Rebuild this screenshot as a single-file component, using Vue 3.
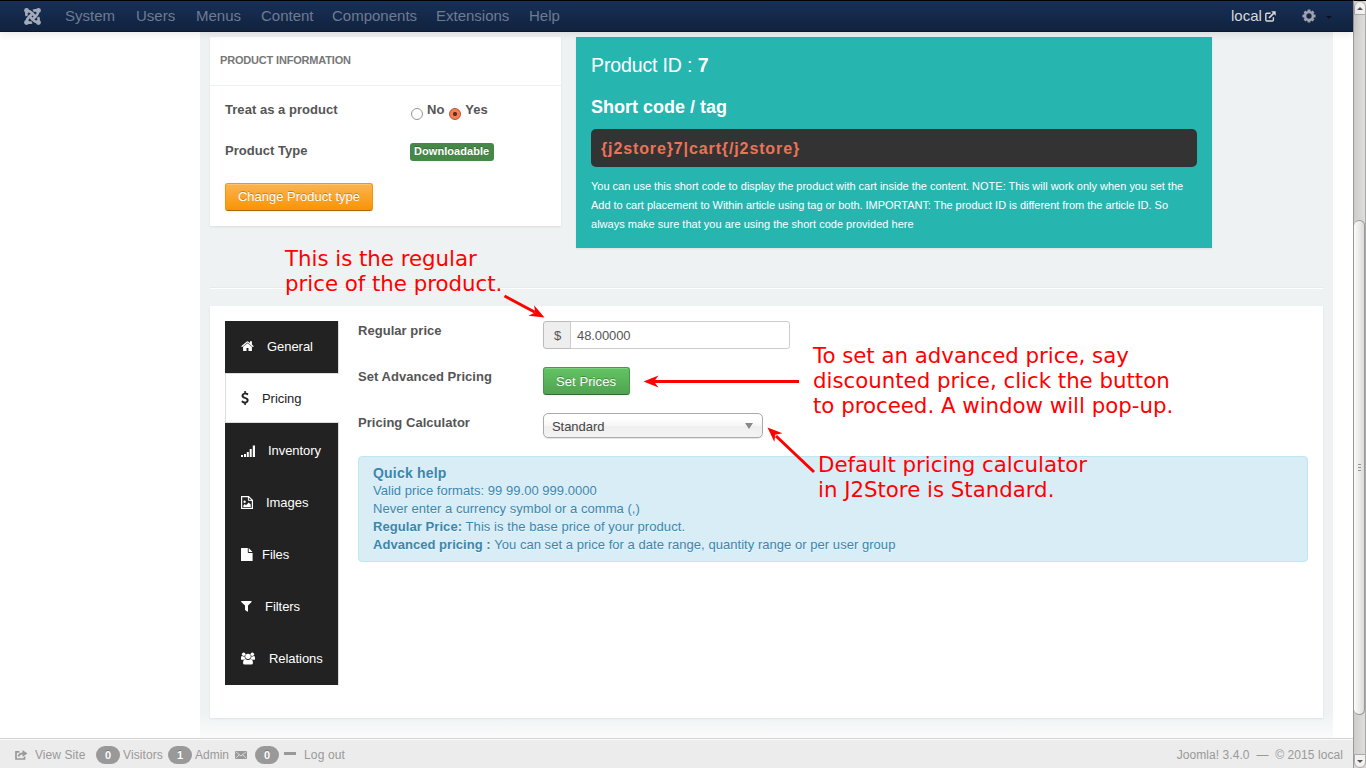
<script setup>
const menu = [
  { t: 'System', w: 71 }, { t: 'Users', w: 60 }, { t: 'Menus', w: 65 }, { t: 'Content', w: 71 },
  { t: 'Components', w: 104 }, { t: 'Extensions', w: 93 }, { t: 'Help', w: 40 },
]
const tabs = [
  { t: 'General', icon: 'home', gap: 26 },
  { t: 'Pricing', icon: 'usd', gap: 21, active: true },
  { t: 'Inventory', icon: 'signal', gap: 27 },
  { t: 'Images', icon: 'image', gap: 25 },
  { t: 'Files', icon: 'file', gap: 21 },
  { t: 'Filters', icon: 'filter', gap: 24 },
  { t: 'Relations', icon: 'group', gap: 28 },
]
</script>

<template>
  <div class="screen">
    <div class="page">
      <header class="topbar">
        <svg class="joomla" width="17" height="17" viewBox="1 1 16 16" fill="none" stroke="#a3abb8">
          <g stroke-width="2.5" stroke-linejoin="round">
            <path d="M3.8 8.400C2.700 6.600 3.100 4.200 5 3.900c1.300-.2 2.100.5 3 1.400l4.600 4.600" />
            <path d="M9.600 3.800C11.400 2.700 13.800 3.100 14.100 5c.2 1.300-.5 2.100-1.400 3l-4.600 4.600" />
            <path d="M14.200 9.600c1.100 1.800.7 4.200-1.200 4.500-1.300.2-2.100-.5-3-1.400L5.400 8.100" />
            <path d="M8.400 14.200c-1.800 1.100-4.200.7-4.500-1.200-.2-1.300.5-2.100 1.400-3l4.600-4.600" />
          </g>
          <g fill="#a3abb8" stroke="none">
            <circle cx="3.400" cy="3.400" r="2.300" /><circle cx="14.600" cy="3.400" r="2.300" />
            <circle cx="3.400" cy="14.600" r="2.300" /><circle cx="14.600" cy="14.600" r="2.300" />
          </g>
        </svg>
        <nav class="menu">
          <span v-for="m in menu" :key="m.t" :style="{ width: m.w + 'px' }">{{ m.t }}</span>
        </nav>
        <span class="site">local</span>
        <svg class="ext" width="11" height="11" viewBox="0 0 11 11" fill="none" stroke="#d9d9d9">
          <path d="M5.6 2.2H1.9a1.1 1.1 0 0 0-1.1 1.1v5.6A1.1 1.1 0 0 0 1.9 10h5.4a1.1 1.1 0 0 0 1.1-1.1V6.2" stroke-width="1.4" />
          <path d="M4 7l4.6-4.6" stroke-width="1.6" />
          <path d="M6.2.3h4.5v4.5z" fill="#d9d9d9" stroke="none" />
        </svg>
        <svg class="gear" width="14" height="14" viewBox="0 0 14 14" fill="none" stroke="#a0a3ac">
          <circle cx="7" cy="7" r="3.900" stroke-width="2.500" />
          <path d="M7 .5v2M7 11.500v2M.5 7h2M11.500 7h2M2.500 2.500l1.300 1.300M10.200 10.200l1.300 1.300M2.500 11.500l1.300-1.300M10.200 3.800l1.300-1.300" stroke-width="2.800" />
        </svg>
        <i class="caret"></i>
      </header>

      <main class="content">
        <div class="row">
          <section class="info">
            <h2>PRODUCT INFORMATION</h2>
            <div class="line treat">
              <b class="lbl">Treat as a product</b>
              <i class="radio"></i><b class="no">No</b><i class="radio on"></i><b class="yes">Yes</b>
            </div>
            <div class="line type">
              <b class="lbl">Product Type</b><span class="badge">Downloadable</span>
            </div>
            <button class="btn warn">Change Product type</button>
          </section>
          <section class="teal">
            <div class="pid">Product ID : <b>7</b></div>
            <h3>Short code / tag</h3>
            <div class="code">{j2store}7|cart{/j2store}</div>
            <p><span class="t1">You can use this short code to display the product with cart inside the content. NOTE: This will work only when you set the</span><br><span class="t2">Add to cart placement to Within article using tag or both. IMPORTANT: The product ID is different from the article ID. So</span><br><span class="t3">always make sure that you are using the short code provided here</span></p>
          </section>
        </div>
        <div class="rule"></div>
        <section class="panel">
          <ul class="tabs">
            <li v-for="t in tabs" :key="t.t" :class="{ active: t.active }">
              <span class="ico" :style="{ width: t.gap + 'px' }">
                <svg v-if="t.icon === 'home'" width="13" height="12" viewBox="50 130 1692 1500" fill="currentColor"><path d="M1472 992v480q0 26-19 45t-45 19h-384v-384h-256v384h-384q-26 0-45-19t-19-45v-480q0-1 .5-3t.5-3l575-474 575 474q1 2 1 6zm223-69l-62 74q-8 9-21 11h-3q-13 0-21-7l-692-577-692 577q-12 8-24 7-13-2-21-11l-62-74q-8-10-7-23.5t11-21.5l719-599q32-26 76-26t76 26l244 204v-195q0-14 9-23t23-9h192q14 0 23 9t9 23v408l219 182q10 8 11 21.5t-7 23.5z" /></svg>
                <svg v-else-if="t.icon === 'usd'" width="8" height="14" viewBox="400 0 990 1792" fill="currentColor"><path d="M1362 1185q0 153-99.5 263.5t-258.5 136.5v175q0 14-9 23t-23 9h-135q-13 0-22.5-9.5t-9.5-22.5v-175q-66-9-127.5-31t-101.5-44.5-74-48-46.5-37.5-17.5-18q-17-21-2-41l103-135q7-10 23-12 15-2 24 9l2 2q113 99 243 125 37 8 74 8 81 0 142.5-43t61.5-122q0-28-15-53t-33.5-42-58.5-37.5-66-32-80-32.5q-39-16-61.5-25t-61.5-26.5-62.5-31-56.5-35.5-53.5-42.5-43.5-49-35.5-58-21-66.5-8.5-78q0-138 98-242t255-134v-180q0-13 9.5-22.5t22.5-9.5h135q14 0 23 9t9 23v176q57 6 110.5 23t87 33.5 63.5 37.5 39 29 15 14q17 18 5 38l-81 146q-8 15-23 16-14 3-27-7-3-3-14.5-12t-39-26.5-58.5-32-74.5-26-85.5-11.5q-95 0-155 43t-60 111q0 26 8.5 48t29.5 41.5 39.5 33 56 31 60.5 27 70 27.5q53 20 81 31.5t76 35 75.5 42.5 62 50 53 63.5 31.5 76.5 13 94z" /></svg>
                <svg v-else-if="t.icon === 'signal'" width="14" height="13" viewBox="0 0 14 13" fill="currentColor"><path d="M0 11h2v2H0zM3 10h2v3H3zM5.8 8h2v5h-2zM8.7 5h2v8h-2zM11.8 1.5H14V13h-2.2z" /></svg>
                <svg v-else-if="t.icon === 'image'" width="12" height="13" viewBox="0 0 12 13"><path d="M.6.6h7l3.8 3.7v8.1H.6z" fill="none" stroke="currentColor" stroke-width="1.2" /><path d="M7.4.6v3.8h4" fill="none" stroke="currentColor" /><circle cx="3.6" cy="5.7" r="1.2" fill="currentColor" /><path d="M2.3 11V9.4l1.5-1.3 1.2 1.2L7.7 6.6l2 2V11z" fill="currentColor" /></svg>
                <svg v-else-if="t.icon === 'file'" width="12" height="13" viewBox="0 0 12 13" fill="currentColor"><path d="M.6 0h6.2v4.2q0 .7.7.7h4.1v7.5q0 .6-.6.6H.6q-.6 0-.6-.6V.6Q0 0 .6 0zM7.7.1l3.8 3.9H7.7z" /></svg>
                <svg v-else-if="t.icon === 'filter'" width="11" height="11" viewBox="0 0 11 11" fill="currentColor"><path d="M.6 0h9.6q.7.3.3.9L7 4.6V10q-.1.8-.8.6L4.3 9.2Q4 9 4 8.600V4.600L.2.9Q0 .2.600 0z" /></svg>
                <svg v-else width="14" height="13" viewBox="0 0 15 13" fill="currentColor"><circle cx="7.500" cy="4.200" r="2.900" /><circle cx="2.900" cy="2" r="1.900" /><circle cx="12.100" cy="2" r="1.900" /><path d="M0 7V5.500Q.2 3.900 1.300 3.900q1.400.8 2.600.5 0 1.500 1 2.500-1.200 0-2 1H1Q0 7.900 0 7zM15 7V5.500q-.2-1.600-1.300-1.600-1.400.8-2.600.5 0 1.500-1 2.500 1.200 0 2 1H14q1 0 1-.9zM2.200 11.300q0-3.900 2.400-4.300 2.900 2 5.800 0 2.400.4 2.400 4.300 0 1.700-1.800 1.700H4q-1.800 0-1.800-1.700z" /></svg>
              </span>{{ t.t }}
            </li>
          </ul>
          <div class="form">
            <div class="field"><b class="lbl">Regular price</b><span class="addon">$</span><span class="input">48.00000</span></div>
            <div class="field"><b class="lbl">Set Advanced Pricing</b><button class="btn ok">Set Prices</button></div>
            <div class="field last"><b class="lbl">Pricing Calculator</b><div class="select"><span>Standard</span><i></i></div></div>
            <div class="help">
              <h4>Quick help</h4>
              <div class="tip">Valid price formats: 99 99.00 999.0000</div>
              <div class="tip">Never enter a currency symbol or a comma (,)</div>
              <div class="tip wide"><b>Regular Price:</b> This is the base price of your product.</div>
              <div class="tip"><b>Advanced pricing :</b> You can set a price for a date range, quantity range or per user group</div>
            </div>
          </div>
        </section>
      </main>

      <footer class="status">
        <svg class="share" width="13" height="10" viewBox="0 0 13 10" fill="none" stroke="#999"><path d="M4.500 1.800H1v7.200h8.500V6.500" stroke-width="1.700" /><path d="M3.500 6.500Q4 3.500 8.200 3.300" stroke-width="1.800" /><path d="M7.500 0L12.500 3.400 7.500 6.800z" fill="#999" stroke="none" /></svg>
        <span class="view">View Site</span>
        <span class="pill">0</span><span class="vis">Visitors</span>
        <span class="pill">1</span><span class="adm">Admin</span>
        <svg class="mail" width="12" height="8" viewBox="0 0 12 8"><rect width="12" height="8" rx=".6" fill="#999" /><path d="M.8.800L6 5 11.200.800M.8 7.200L4.200 3.700M11.200 7.200L7.800 3.700" fill="none" stroke="#ececec" stroke-width=".8" /></svg>
        <span class="pill">0</span><i class="dash"></i><span class="out">Log out</span>
        <span class="ver">Joomla! 3.4.0 &nbsp;—&nbsp; © 2015 local</span>
      </footer>
    </div>

    <aside class="scroll">
      <div class="end up"><i></i></div>
      <div class="track"><div class="thumb"><i></i><i></i><i></i></div></div>
      <div class="end down"><i></i></div>
    </aside>

    <div class="note n1">This is the regular<br>price of the product.</div>
    <div class="note n2">To set an advanced price, say<br>discounted price, click the button<br>to proceed. A window will pop-up.</div>
    <div class="note n3">Default pricing calculator<br>in J2Store is Standard.</div>
    <svg class="arrows" width="1366" height="768" viewBox="0 0 1366 768">
      <g stroke="#f00" stroke-width="3">
        <path d="M504.500 296L535 312.200" /><path d="M799 381.500H654" /><path d="M814 472L776 436" />
      </g>
      <g fill="#f00">
        <path d="M0 0L15-6L10.500 0L15 6z" transform="translate(643.5 381.500)" />
        <path d="M0 0L15-6L10.500 0L15 6z" transform="translate(544.500 317.500) rotate(208)" />
        <path d="M0 0L15-6L10.500 0L15 6z" transform="translate(767.500 427.500) rotate(43)" />
      </g>
    </svg>
  </div>
</template>

<style>
html, body { margin: 0; overflow: hidden; }
</style>

<style scoped>
* { box-sizing: border-box; }
.screen { position: relative; width: 1366px; height: 768px; display: flex; overflow: hidden; background: #fff; font: 13px/18px "Liberation Sans", Arial, sans-serif; color: #555; white-space: nowrap; }
.page { width: 1353px; height: 768px; display: flex; flex-direction: column; }
i { display: block; flex: none; }
svg { display: block; flex: none; }

.topbar { position: relative; z-index: 2; height: 32px; flex: none; display: flex; align-items: center; border-top: 1px solid #000; border-bottom: 1px solid #0a1730; background: linear-gradient(#182f57, #10223e); box-shadow: 0 1px 10px rgba(0,0,0,.12); font-size: 15px; color: #6f7b8f; }
.joomla { margin-left: 24px; width: 17px; height: 17px; }
.menu { display: flex; margin-left: 24px; }
.site { margin-left: auto; color: #d9d9d9; width: 34px; }
.ext { margin-left: 0; }
.gear { margin-left: 26px; }
.caret { margin: 2px 21px 0 10px; border: 3px solid transparent; border-top: 3px solid #081120; border-bottom: 0; }

.content { height: 706px; flex: none; margin: 0 20px 0 200px; padding: 5px 10px 0; background: linear-gradient(#eef2f3 680px, #fafbfb 706px); }
.row { display: flex; gap: 15px; align-items: flex-start; height: 250px; }
.info { width: 351px; height: 189px; background: #fff; box-shadow: 0 1px 2px rgba(0,0,0,.08); }
.info h2 { margin: 0; height: 49px; padding: 14px 10px 0; border-bottom: 1px solid #ecf0f0; font-size: 11px; line-height: 18px; color: #777; letter-spacing: -.18px; }
.line { display: flex; padding-left: 15px; }
.lbl { width: 185px; flex: none; letter-spacing: .04px; }
.treat { padding-top: 15px; height: 56px; }
.type { height: 41px; }
.radio { width: 12px; height: 12px; margin: 7px 4px 0 1px; border: 1px solid #959595; border-radius: 50%; background: #fff; }
.radio.on { margin: 7px 4px 0 5px; border-color: #b3532f; background: radial-gradient(circle, #61301d 0 1.800px, #f57f53 2.400px); }
.badge { height: 18px; margin-top: 1px; padding: 0 4px; border-radius: 3px; background: #468847; color: #fff; font-weight: bold; font-size: 11px; line-height: 17px; letter-spacing: .06px; text-shadow: 0 -1px 0 rgba(0,0,0,.25); width: 84px; }
.btn { display: block; height: 28px; padding: 0; border-radius: 3px; color: #fff; font: 13px/26px "Liberation Sans", Arial, sans-serif; text-align: center; text-shadow: 0 -1px 0 rgba(0,0,0,.25); box-shadow: inset 0 1px 0 rgba(255,255,255,.2), 0 1px 2px rgba(0,0,0,.05); }
.warn { margin-left: 15px; width: 148px; border: 1px solid #f89406; border-bottom-color: #ad6704; background: linear-gradient(#fbb450, #f89406); }
.teal { width: 636px; height: 211px; padding: 18px 15px 0; background: #27b5b0; color: #fff; box-shadow: 0 1px 2px rgba(0,0,0,.08); }
.pid { font-size: 19.500px; line-height: 20px; letter-spacing: -.13px; }
.teal h3 { margin: 21px 0 0; font-size: 18px; line-height: 22px; }
.code { height: 38px; margin-top: 11px; padding-left: 10px; border-radius: 5px; background: #333; color: #ec7357; font-size: 16px; font-weight: bold; line-height: 39px; letter-spacing: .88px; }
.teal p { margin: 10px 0 0; font-size: 11px; line-height: 19px; }
.t1 { letter-spacing: -.008px; }
.t2 { letter-spacing: -.03px; }
.t3 { letter-spacing: .015px; }
.rule { height: 2px; border-top: 1px solid #e8ebec; border-bottom: 1px solid #fff; }
.panel { display: flex; margin-top: 17px; height: 412px; padding: 15px; background: #fff; box-shadow: 0 1px 2px rgba(0,0,0,.08); }
.tabs { width: 114px; height: 364px; margin: 0; padding: 0; border-right: 1px solid #ddd; list-style: none; background: #222; }
.tabs li { display: flex; align-items: center; height: 52px; padding-left: 16px; color: #fff; letter-spacing: -.05px; }
.ico svg { position: relative; top: -1px; }
.tabs .active { height: 50px; margin-bottom: 2px; width: 114px; border: 1px solid #ddd; border-right: 0; padding: 1px 0 0 15px; background: #fff; color: #222; }
.form { width: 950px; margin-left: 19px; }
.field { display: flex; height: 46px; }
.field .lbl { padding-top: 1px; }
.last { height: 43px; }
.addon { width: 28px; height: 28px; border: 1px solid #bbb; border-radius: 3px 0 0 3px; background: #eee; text-align: center; line-height: 27px; padding-left: 1px; }
.input { width: 220px; height: 28px; margin-left: -1px; padding-left: 6px; border: 1px solid #ccc; border-radius: 0 3px 3px 0; line-height: 27px; letter-spacing: -.1px; }
.ok { width: 87px; padding: 1px 1px 0 0; border: 1px solid #46984b; border-bottom-color: #306d34; background: linear-gradient(#62c462, #51a351); letter-spacing: .1px; }
.select { display: flex; justify-content: space-between; width: 220px; height: 25px; border: 1px solid #aaa; border-radius: 5px; padding: 0 9px 0 8px; line-height: 25px; color: #444; letter-spacing: -.05px; background: linear-gradient(#fff 20%, #f6f6f6 50%, #eee 52%, #f4f4f4); box-shadow: 0 1px 1px rgba(0,0,0,.1); }
.select i { margin-top: 9px; height: 0; border: 4px solid transparent; border-top: 6px solid #888; border-bottom: 0; }
.help { height: 106px; padding: 7px 14px; border: 1px solid #bce8f1; border-radius: 4px; background: #d9edf7; color: #3a87ad; text-shadow: 0 1px 0 rgba(255,255,255,.5); }
.help h4 { margin: 0; font-size: 14px; line-height: 18px; letter-spacing: .2px; }
.tip { letter-spacing: .04px; }
.wide { letter-spacing: .07px; }

.status { height: 30px; flex: none; display: flex; align-items: center; border-top: 1px solid #d4d4d4; box-shadow: inset 0 1px 0 #fafafa; background: #ececec; color: #999; font-size: 12px; padding: 3px 10px 0 15px; }
.view { margin-left: 7px; width: 61px; letter-spacing: .08px; }
.pill { width: 24px; height: 18px; border-radius: 9px; background: #999; color: #fff; text-align: center; font-weight: bold; font-size: 11px; line-height: 18px; text-shadow: 0 -1px 0 rgba(0,0,0,.25); }
.vis { margin-left: 3px; width: 45px; letter-spacing: .1px; }
.adm { margin-left: 3px; width: 40px; }
.mail { margin-right: 8px; }
.dash { margin: 0 8px 3px 5px; width: 12px; height: 3px; background: #999; }
.out { letter-spacing: .14px; }
.ver { margin-left: auto; letter-spacing: .07px; }

.scroll { width: 13px; height: 768px; display: flex; flex-direction: column; border-left: 1px solid #999; background: #d9d7d5; border-top: 1px solid #000; }
.end { height: 14px; flex: none; display: flex; align-items: center; justify-content: center; background: #f3f2f1; border: 1px solid #aaa; border-radius: 6px 6px 0 0; }
.end i { border: 3px solid transparent; }
.up i { border-bottom-color: #555; border-top: 0; }
.down { border-radius: 0 0 6px 6px; }
.down i { border-top-color: #555; border-bottom: 0; }
.track { flex: 1; padding-top: 205px; background: linear-gradient(90deg, #cfcdcb, #dfdddb); border-right: 1px solid #aaa; }
.thumb { height: 495px; display: flex; flex-direction: column; align-items: center; justify-content: center; gap: 2px; border: 1px solid #999; border-left: 0; border-radius: 6px; background: linear-gradient(90deg, #fbfbfa, #dddbd9); }
.thumb i { width: 3px; height: 1px; background: #999; }

.note { position: absolute; z-index: 4; font: 21.330px/25px "DejaVu Sans", sans-serif; color: #f00; letter-spacing: -.02px; }
.n1 { left: 285px; top: 246px; }
.n2 { left: 813px; top: 343px; }
.n3 { left: 818px; top: 452px; }
.arrows { position: absolute; left: 0; top: 0; z-index: 4; }
</style>
